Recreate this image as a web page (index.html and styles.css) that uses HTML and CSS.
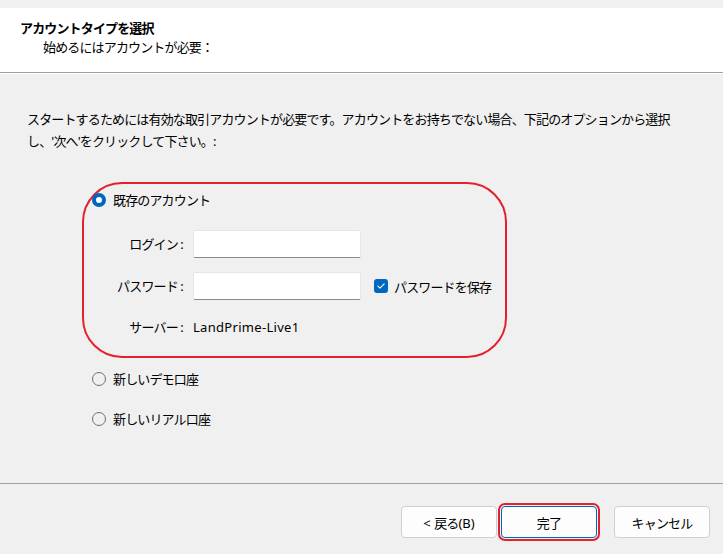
FILE: index.html
```html
<!DOCTYPE html>
<html lang="ja">
<head>
<meta charset="utf-8">
<title>アカウントタイプを選択</title>
<link rel="stylesheet" href="styles.css">
</head>
<body>
<div class="window">
  <div class="top-strip"></div>
  <header class="header">
    <div class="title">アカウントタイプを選択</div>
    <div class="subtitle">始めるにはアカウントが必要：</div>
  </header>
  <main class="main">
    <p class="intro">スタートするためには有効な取引アカウントが必要です。アカウントをお持ちでない場合、下記のオプションから選択<br>し、'次へ'をクリックして下さい。:</p>
    <section class="group">
      <div class="radio-row"><span class="radio checked"></span><span>既存のアカウント</span></div>
      <div class="form">
        <span class="flabel">ログイン :</span>
        <span class="input"></span>
        <span></span>
        <span class="flabel">パスワード :</span>
        <span class="input"></span>
        <div class="check-row">
          <span class="checkbox"><svg width="14" height="14" viewBox="0 0 14 14"><path d="M4 7.2 L6 9.1 L10.2 4.9" fill="none" stroke="#fff" stroke-width="1.1" stroke-linecap="round" stroke-linejoin="round"/></svg></span>
          <span>パスワードを保存</span>
        </div>
        <span class="flabel server-label">サーバー :</span>
        <span class="server-val">LandPrime-Live1</span>
      </div>
    </section>
    <div class="radio-row option first"><span class="radio"></span><span>新しいデモ口座</span></div>
    <div class="radio-row option"><span class="radio"></span><span>新しいリアル口座</span></div>
  </main>
  <footer class="footer">
    <button class="btn"><span class="latin">&lt;&nbsp;</span>戻る<span class="latin">(B)</span></button>
    <button class="btn default">完了</button>
    <button class="btn cancel">キャンセル</button>
  </footer>
</div>
</body>
</html>
```

FILE: styles.css
```css
* { box-sizing: border-box; }
html, body { margin: 0; padding: 0; }
body {
  background: #f0f0f0;
  font-family: "Noto Sans", "Noto Sans CJK JP", sans-serif;
  font-size: 13px;
  color: #000;
  letter-spacing: -0.85px;
}
.window {
  width: 723px;
  height: 554px;
  display: flex;
  flex-direction: column;
  overflow: hidden;
}
.top-strip { height: 8px; background: #f0f0f0; flex: none; }
.header {
  flex: none;
  height: 65px;
  background: #fff;
  border-bottom: 1px solid #a0a0a0;
  padding: 10px 0 0 20px;
}
.title { font-weight: 700; line-height: 20px; }
.subtitle { line-height: 20px; padding-left: 23px; margin-top: -1px; }
.main {
  flex: 1;
  border-top: 1px solid #fff;
}
.intro {
  margin: 34px 0 0 27px;
  line-height: 22px;
  white-space: nowrap;
}
.group {
  margin: 30px 0 0 82px;
  width: 425px;
  height: 176px;
  border: 2px solid #e3212c;
  border-radius: 40px;
  padding: 6px 0 0 8px;
}
.radio-row {
  display: flex;
  align-items: center;
  gap: 7px;
  height: 20px;
  line-height: 20px;
}
.radio {
  width: 14px;
  height: 14px;
  border-radius: 50%;
  border: 1px solid #6e6e6e;
  flex: none;
}
.radio.checked {
  border: 4px solid #0067c0;
  background: #fff;
}
.form {
  display: grid;
  grid-template-columns: 91px 168px auto;
  grid-template-rows: 28px 28px 20px;
  column-gap: 10px;
  row-gap: 14px;
  margin-top: 20px;
  align-items: center;
}
.flabel { text-align: right; line-height: 20px; white-space: nowrap; }
.server-label, .server-val { margin-top: 6px; }
.latin { letter-spacing: 0; }
.server-val { letter-spacing: 0.3px; }
.input {
  display: block;
  height: 28px;
  background: #fff;
  border: 1px solid #e6e6e6;
  border-bottom: 1px solid #8a8a8a;
  border-radius: 2px;
}
.check-row {
  display: flex;
  align-items: center;
  gap: 6px;
  margin-left: 3px;
  white-space: nowrap;
}
.checkbox {
  width: 14px;
  height: 14px;
  border-radius: 3px;
  background: #0067c0;
  display: flex;
  flex: none;
}
.option { margin-left: 92px; }
.option.first { margin-top: 11px; }
.option + .option { margin-top: 20px; }
.footer {
  flex: none;
  height: 71px;
  border-top: 1px solid #a0a0a0;
  display: flex;
  justify-content: flex-end;
  align-items: flex-start;
  padding: 22px 13px 0 0;
}
.btn {
  width: 96px;
  height: 32px;
  background: #fdfdfd;
  border: 1px solid #d0d0d0;
  border-radius: 4px;
  font-family: "Noto Sans", "Noto Sans CJK JP", sans-serif;
  font-size: 13px;
  letter-spacing: -0.85px;
  color: #000;
  padding: 0;
}
.btn.default {
  margin-left: 4px;
  border: 1px solid #0067c0;
  outline: 2px solid #e3212c;
  outline-offset: 1px;
}
.btn.cancel { margin-left: 17px; }
```
